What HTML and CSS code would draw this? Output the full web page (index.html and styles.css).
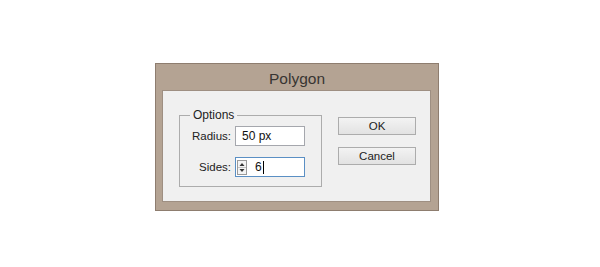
FILE: index.html
```html
<!DOCTYPE html>
<html>
<head>
<meta charset="utf-8">
<link rel="stylesheet" href="styles.css">
</head>
<body>
<div class="stage">
  <div class="dialog">
    <div class="title">Polygon</div>
    <div class="panel">
      <fieldset class="group">
        <legend class="legend">Options</legend>
        <div class="rows">
          <label class="lbl">Radius:</label>
          <div class="field"><span class="val">50 px</span></div>
          <label class="lbl">Sides:</label>
          <div class="field focused">
            <svg class="spin" width="10" height="15" viewBox="0 0 10 15">
              <rect x="0.5" y="0.5" width="9" height="14" fill="#f4f4f4" stroke="#9a9a9a"/>
              <line x1="1" y1="7.5" x2="9" y2="7.5" stroke="#c4c4c4"/>
              <path d="M2.5 6 L5 3 L7.5 6 Z" fill="#333"/>
              <path d="M2.5 9 L5 12 L7.5 9 Z" fill="#333"/>
            </svg>
            <span class="val">6<span class="caret"></span></span>
          </div>
        </div>
      </fieldset>
      <div class="buttons">
        <button class="btn">OK</button>
        <button class="btn">Cancel</button>
      </div>
    </div>
  </div>
</div>
</body>
</html>
```

FILE: styles.css
```css
html, body {
  margin: 0;
  padding: 0;
  background: #ffffff;
}
.stage {
  padding: 63px 0 0 155px;
  font-family: "Liberation Sans", Arial, sans-serif;
  color: #222;
}
.dialog {
  width: 282px;
  height: 146px;
  border: 1px solid #8e7d6f;
  background: #b4a393;
  display: flex;
  flex-direction: column;
}
.title {
  height: 26px;
  line-height: 29px;
  text-align: center;
  font-size: 15.5px;
  color: #383532;
}
.panel {
  margin: 0 7px 0 6px;
  height: 110px;
  border: 1px solid #9e8f82;
  background: #f0f0f0;
  display: flex;
  align-items: flex-start;
}
.group {
  margin: 17px 0 0 16px;
  padding: 0 0 9px 0;
  width: 141px;
  border: 1px solid #acacac;
  box-sizing: content-box;
  min-width: 0;
}
.legend {
  margin-left: 10px;
  padding: 0 3px;
  font-size: 12px;
  line-height: 14px;
  color: #222;
}
.rows {
  display: grid;
  grid-template-columns: 51px 70px;
  column-gap: 4px;
  row-gap: 11px;
  align-items: center;
  padding-top: 4px;
}
.lbl {
  text-align: right;
  font-size: 11.5px;
  color: #222;
}
.field {
  height: 18px;
  border: 1px solid #a5a7ad;
  background: #ffffff;
  display: flex;
  align-items: center;
  font-size: 12px;
  padding-left: 6px;
}
.field.focused {
  border-color: #5a8fc4;
  padding-left: 1px;
}
.spin {
  display: block;
  margin-right: 8px;
  margin-top: 1px;
}
.val {
  display: inline-flex;
  align-items: center;
  color: #111;
}
.caret {
  display: inline-block;
  width: 1px;
  height: 13px;
  background: #000;
  margin-left: 1px;
}
.buttons {
  margin: 26px 0 0 16px;
  display: flex;
  flex-direction: column;
  gap: 12px;
}
.btn {
  width: 78px;
  height: 18px;
  padding: 0;
  border: 1px solid #acacac;
  background: linear-gradient(#f3f3f3, #e2e2e2);
  font-family: "Liberation Sans", Arial, sans-serif;
  font-size: 11.5px;
  color: #222;
  border-radius: 0;
}
```
